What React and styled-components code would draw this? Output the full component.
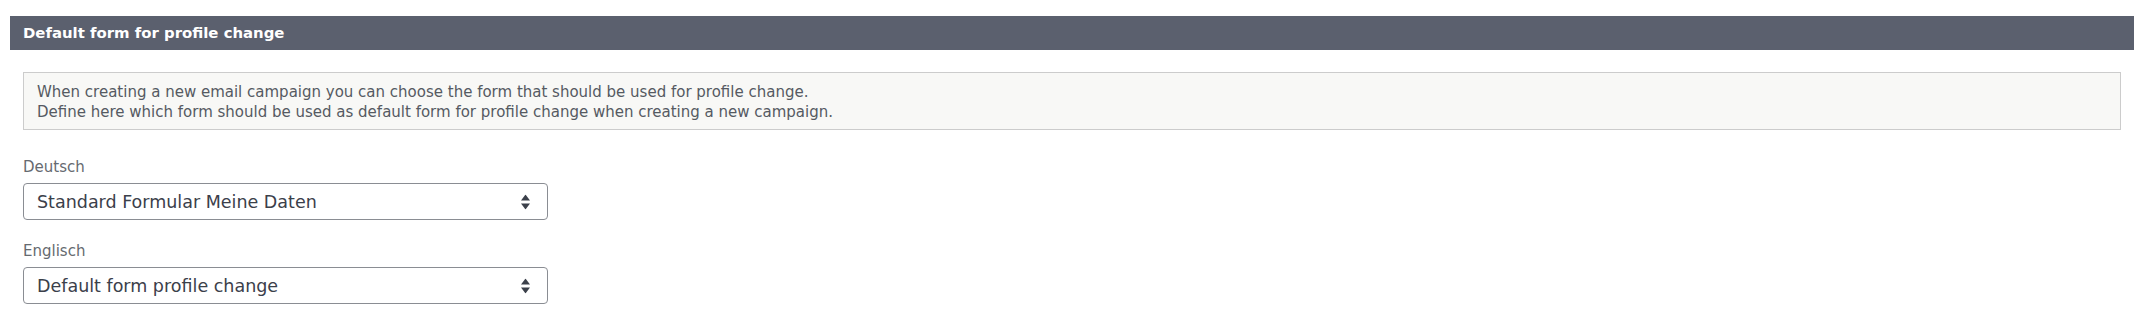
import React from "react";
import styled, { createGlobalStyle } from "styled-components";

const Global = createGlobalStyle`
  html, body { margin: 0; padding: 0; background: #fff; }
  body { font-family: "DejaVu Sans", Verdana, sans-serif; }
`;

const Page = styled.div`
  padding: 16px 6px 0 10px;
`;

const SectionHeader = styled.h2`
  margin: 0;
  height: 34px;
  display: flex;
  align-items: center;
  padding: 0 13px;
  background: #5b606e;
  color: #fff;
  font-size: 14.9px;
  font-weight: bold;
`;

const Body = styled.div`
  padding: 22px 13px 0 13px;
`;

const InfoBox = styled.div`
  border: 1px solid #cccccc;
  background: #f8f8f6;
  padding: 9px 13px 7px;
  color: #555a62;
  font-size: 15px;
  line-height: 20px;
`;

const Fields = styled.div`
  display: flex;
  flex-direction: column;
  gap: 21px;
  padding-top: 27px;
`;

const Field = styled.div`
  display: flex;
  flex-direction: column;
  gap: 6px;
`;

const Label = styled.label`
  color: #666a70;
  font-size: 15px;
  line-height: 20px;
`;

const SelectWrap = styled.div`
  position: relative;
  width: 525px;
`;

const Select = styled.select`
  appearance: none;
  -webkit-appearance: none;
  width: 100%;
  height: 37px;
  box-sizing: border-box;
  border: 1px solid #8a8d93;
  border-radius: 4px;
  background: #fff;
  padding: 0 30px 0 13px;
  font-family: "DejaVu Sans", Verdana, sans-serif;
  font-size: 17.5px;
  color: #3b404a;
  outline: none;
`;

const Arrows = styled.svg`
  position: absolute;
  right: 18px;
  top: 50%;
  transform: translateY(-50%);
  pointer-events: none;
`;

function SortArrows() {
  return (
    <Arrows width="9" height="15" viewBox="0 0 9 15">
      <path d="M4.5 0 L9 6 L0 6 Z" fill="#3b404a" />
      <path d="M0 9 L9 9 L4.5 15 Z" fill="#3b404a" />
    </Arrows>
  );
}

function SelectField({ label, value, options }) {
  return (
    <Field>
      <Label>{label}</Label>
      <SelectWrap>
        <Select defaultValue={value}>
          {options.map((o) => (
            <option key={o}>{o}</option>
          ))}
        </Select>
        <SortArrows />
      </SelectWrap>
    </Field>
  );
}

export default function App() {
  const options = ["Standard Formular Meine Daten", "Default form profile change"];
  return (
    <Page>
      <Global />
      <SectionHeader>Default form for profile change</SectionHeader>
      <Body>
        <InfoBox>
          When creating a new email campaign you can choose the form that should be used for profile change.
          <br />
          Define here which form should be used as default form for profile change when creating a new campaign.
        </InfoBox>
        <Fields>
          <SelectField label="Deutsch" value="Standard Formular Meine Daten" options={options} />
          <SelectField label="Englisch" value="Default form profile change" options={options} />
        </Fields>
      </Body>
    </Page>
  );
}
